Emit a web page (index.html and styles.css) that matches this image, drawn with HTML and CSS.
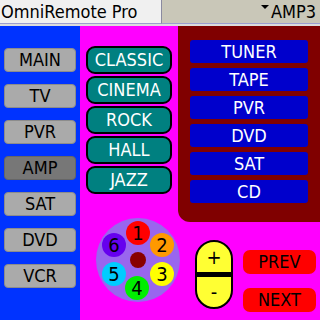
FILE: index.html
```html
<!DOCTYPE html>
<html>
<head>
<meta charset="utf-8">
<link rel="stylesheet" href="styles.css">
</head>
<body>
<div class="screen">
  <header class="titlebar">
    <div class="title">OmniRemote Pro</div>
    <div class="picker"><span class="tri"></span>AMP3</div>
  </header>
  <div class="main">
    <nav class="devices">
      <div class="dev">MAIN</div>
      <div class="dev">TV</div>
      <div class="dev">PVR</div>
      <div class="dev active">AMP</div>
      <div class="dev">SAT</div>
      <div class="dev">DVD</div>
      <div class="dev">VCR</div>
    </nav>
    <div class="area">
      <div class="modes">
        <div class="mode">CLASSIC</div>
        <div class="mode">CINEMA</div>
        <div class="mode">ROCK</div>
        <div class="mode">HALL</div>
        <div class="mode">JAZZ</div>
      </div>
      <div class="inputs">
        <div class="inp">TUNER</div>
        <div class="inp">TAPE</div>
        <div class="inp">PVR</div>
        <div class="inp">DVD</div>
        <div class="inp">SAT</div>
        <div class="inp">CD</div>
      </div>
      <div class="dialcell">
        <div class="dial">
          <div class="dot d1">1</div>
          <div class="dot d2">2</div>
          <div class="dot d3">3</div>
          <div class="dot d4">4</div>
          <div class="dot d5">5</div>
          <div class="dot d6">6</div>
          <div class="hub"></div>
        </div>
      </div>
      <div class="controls">
        <div class="rocker">
          <div class="rk">+</div>
          <div class="rkbar"></div>
          <div class="rk">-</div>
        </div>
        <div class="skip">
          <div class="sk">PREV</div>
          <div class="sk">NEXT</div>
        </div>
      </div>
    </div>
  </div>
</div>
</body>
</html>
```

FILE: styles.css
```css
html, body {
  margin: 0;
  padding: 0;
}
body {
  font-family: "DejaVu Sans Condensed", "DejaVu Sans", sans-serif;
  font-stretch: condensed;
}
.screen {
  width: 320px;
  height: 320px;
  overflow: hidden;
  display: flex;
  flex-direction: column;
}
.titlebar {
  height: 26px;
  box-sizing: border-box;
  display: flex;
  background: #dcdcdc;
  padding-bottom: 2px;
}
.title {
  width: 160px;
  height: 23px;
  border-bottom: 1px solid #9c9ed0;
  border-right: 1px solid #8a8aa0;
  background: #f0f0f0;
  font-size: 18px;
  line-height: 24px;
  padding-left: 1px;
  color: #000;
  white-space: nowrap;
  box-sizing: content-box;
}
.picker {
  flex: 1;
  height: 23px;
  border-bottom: 1px solid #9c9ed0;
  background: #c9c7b8;
  display: flex;
  justify-content: flex-end;
  align-items: center;
  font-size: 18px;
  line-height: 24px;
  padding-right: 4px;
  color: #000;
}
.tri {
  width: 0;
  height: 0;
  border-left: 4px solid transparent;
  border-right: 4px solid transparent;
  border-top: 4px solid #000;
  align-self: flex-start;
  margin-top: 5px;
  margin-right: 2px;
}
.main {
  flex: 1;
  display: flex;
}
.devices {
  width: 80px;
  background: #0033ff;
  display: flex;
  flex-direction: column;
  align-items: center;
  gap: 12px;
  padding-top: 22px;
  box-sizing: border-box;
}
.dev {
  width: 72px;
  height: 24px;
  box-sizing: border-box;
  background: #aaaaaa;
  border: 1px solid #8c8c8c;
  border-radius: 4px;
  text-align: center;
  font-size: 18px;
  line-height: 22px;
  color: #000;
}
.dev.active {
  background: #777777;
  border-color: #666;
}
.area {
  flex: 1;
  background: #ff00ff;
  display: grid;
  grid-template-columns: 98px 142px;
  grid-template-rows: 196px 1fr;
}
.modes {
  display: flex;
  flex-direction: column;
  gap: 2px;
  padding-top: 20px;
  padding-left: 6px;
}
.mode {
  width: 86px;
  height: 28px;
  box-sizing: border-box;
  background: #008080;
  border: 2px solid #000;
  border-radius: 9px;
  color: #fff;
  text-align: center;
  font-size: 18px;
  line-height: 24px;
}
.inputs {
  background: #800000;
  border-bottom-left-radius: 12px;
  display: flex;
  flex-direction: column;
  gap: 5px;
  padding: 14px 12px 0 12px;
}
.inp {
  height: 23px;
  background: #0000cc;
  border-radius: 3px;
  color: #fff;
  text-align: center;
  font-size: 18px;
  line-height: 23px;
}
.dialcell {
  position: relative;
}
.dial {
  position: relative;
  width: 84px;
  height: 84px;
  border-radius: 50%;
  background: #9966ee;
  margin-left: 16px;
  margin-top: -4px;
}
.dot, .hub {
  position: absolute;
  border-radius: 50%;
}
.dot {
  width: 24px;
  height: 24px;
  font-size: 20px;
  line-height: 24px;
  text-align: center;
  color: #000;
}
.d1 { left: 30px; top: 3px; background: #ff0000; }
.d2 { left: 54px; top: 15px; background: #ff9900; }
.d3 { left: 54px; top: 44px; background: #ffff00; }
.d4 { left: 29px; top: 58px; background: #00ee00; }
.d5 { left: 6px; top: 44px; background: #00ccff; }
.d6 { left: 6px; top: 15px; background: #6600ee; }
.hub {
  left: 34px;
  top: 34px;
  width: 16px;
  height: 16px;
  background: #880000;
}
.controls {
  display: flex;
  align-items: flex-start;
}
.rocker {
  width: 38px;
  height: 69px;
  box-sizing: border-box;
  margin-top: 18px;
  margin-left: 17px;
  background: #ffff33;
  border: 2px solid #000;
  border-radius: 19px;
  display: flex;
  flex-direction: column;
  overflow: hidden;
}
.rk {
  flex: 1;
  text-align: center;
  font-size: 20px;
  line-height: 30px;
  color: #000;
}
.rkbar {
  height: 7px;
  background: #000;
}
.skip {
  margin-left: 10px;
  margin-top: 28px;
  display: flex;
  flex-direction: column;
  gap: 14px;
}
.sk {
  width: 73px;
  height: 24px;
  background: #ff0000;
  border-radius: 7px;
  text-align: center;
  color: #000;
  font-size: 18px;
  line-height: 24px;
}
```
